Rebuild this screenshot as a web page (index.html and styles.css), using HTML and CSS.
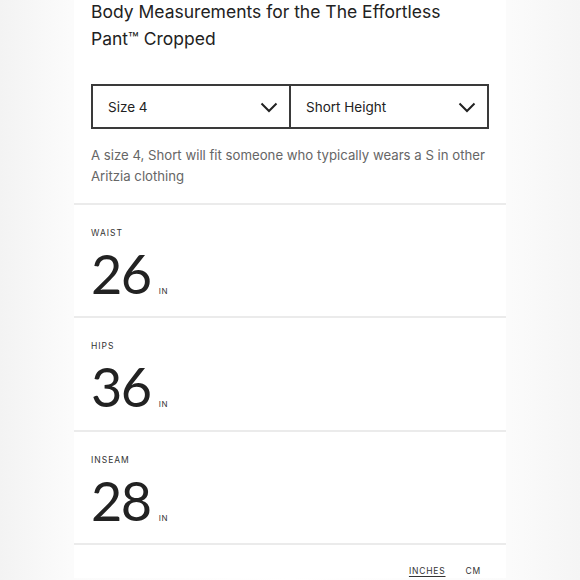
FILE: index.html
```html
<!DOCTYPE html>
<html>
<head>
<meta charset="utf-8">
<link rel="stylesheet" href="styles.css">
</head>
<body>
<div class="page">
  <div class="panel">
    <div class="intro">
      <h1 class="title">Body Measurements for the The Effortless Pant™ Cropped</h1>
      <div class="selects">
        <div class="select">
          <span>Size 4</span>
          <svg class="chev" width="18" height="11" viewBox="0 0 18 11"><path d="M1.5 1.5 L9 9 L16.5 1.5" fill="none" stroke="#222" stroke-width="2"/></svg>
        </div>
        <div class="select">
          <span>Short Height</span>
          <svg class="chev" width="18" height="11" viewBox="0 0 18 11"><path d="M1.5 1.5 L9 9 L16.5 1.5" fill="none" stroke="#222" stroke-width="2"/></svg>
        </div>
      </div>
      <p class="desc">A size 4, Short will fit someone who typically wears a S in other Aritzia clothing</p>
    </div>
    <div class="measure">
      <div class="label">WAIST</div>
      <div class="value"><span class="num">26</span><span class="unit">IN</span></div>
    </div>
    <div class="measure">
      <div class="label">HIPS</div>
      <div class="value"><span class="num">36</span><span class="unit">IN</span></div>
    </div>
    <div class="measure">
      <div class="label">INSEAM</div>
      <div class="value"><span class="num">28</span><span class="unit">IN</span></div>
    </div>
    <div class="units">
      <span class="u active">INCHES</span>
      <span class="u">CM</span>
    </div>
  </div>
</div>
</body>
</html>
```
FILE: styles.css
```css
* { box-sizing: border-box; }
html, body { margin: 0; padding: 0; }
body {
  background: linear-gradient(90deg, #f3f3f3 0%, #fbfbfb 12%, #ffffff 50%, #fbfbfb 88%, #f5f5f5 100%);
  font-family: Inter, "Liberation Sans", sans-serif;
  color: #222;
  width: 580px;
  height: 580px;
  overflow: hidden;
}
.page { padding-left: 74px; }
.panel {
  width: 432px;
  background: #fff;
  min-height: 580px;
}
.intro { padding: 0 17px 16px 17px; }
.title {
  margin: 0;
  margin-top: -2px;
  font-weight: 400;
  font-size: 17.5px;
  line-height: 27px;
  color: #222;
}
.selects {
  display: flex;
  margin-top: 32px;
  border: 2px solid #3a3a3a;
  height: 45px;
}
.select {
  flex: 1;
  display: flex;
  align-items: center;
  justify-content: space-between;
  padding: 1px 11px 0 15px;
  font-size: 13.5px;
  color: #222;
}
.select + .select { border-left: 2px solid #3a3a3a; }
.desc {
  margin: 16px 0 0 0;
  font-size: 13.2px;
  line-height: 21px;
  color: #666;
}
.measure {
  border-top: 2px solid #ebebeb;
  padding: 22px 17px 14px 17px;
  height: 113.3px;
}
.label {
  font-size: 8.5px;
  letter-spacing: 1px;
  line-height: 12px;
  color: #333;
}
.value {
  display: flex;
  align-items: baseline;
  gap: 8px;
  margin-top: 8px;
}
.num {
  font-family: Lato, Inter, sans-serif;
  font-size: 54px;
  line-height: 54px;
  letter-spacing: -1.5px;
  color: #222;
}
.unit {
  font-size: 8px;
  letter-spacing: 0.8px;
  color: #333;
}
.units {
  border-top: 2px solid #ebebeb;
  display: flex;
  justify-content: flex-end;
  gap: 20px;
  padding: 21px 25px 0 0;
}
.u {
  font-size: 8.5px;
  letter-spacing: 0.8px;
  color: #333;
}
.u.active {
  text-decoration: underline;
  text-underline-offset: 2px;
}
```
